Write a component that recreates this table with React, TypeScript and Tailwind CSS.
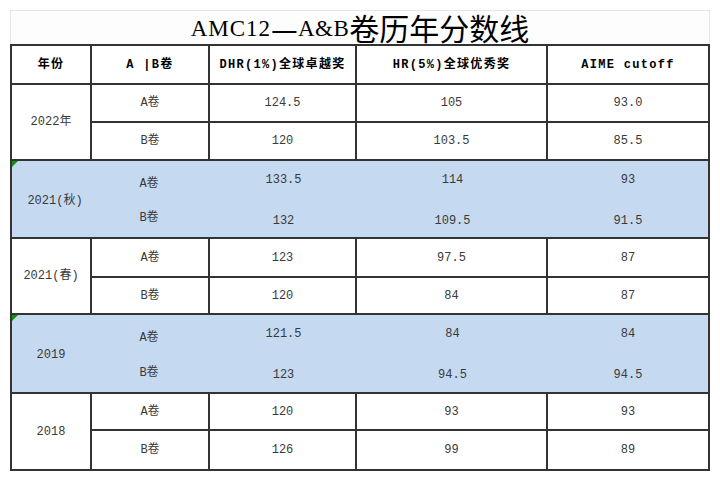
import React from "react";

const COLS = "grid grid-cols-[80px_118px_147px_191px_160px]";
const LINE = "border-[#333333]";
const FONT = { fontFamily: '"Liberation Mono", "Noto Sans CJK SC", monospace' };

type Group = {
  year: string;
  blue: boolean;
  shift?: boolean;
  rows: [string, string, string, string][];
  heights: string;
};

const groups: Group[] = [
  {
    year: "2022年",
    blue: false,
    heights: "grid-rows-[38px_36px]",
    rows: [
      ["A卷", "124.5", "105", "93.0"],
      ["B卷", "120", "103.5", "85.5"],
    ],
  },
  {
    year: "2021(秋)",
    blue: true,
    shift: true,
    heights: "grid-rows-[38px_38px]",
    rows: [
      ["A卷", "133.5", "114", "93"],
      ["B卷", "132", "109.5", "91.5"],
    ],
  },
  {
    year: "2021(春)",
    blue: false,
    heights: "grid-rows-[39px_35px]",
    rows: [
      ["A卷", "123", "97.5", "87"],
      ["B卷", "120", "84", "87"],
    ],
  },
  {
    year: "2019",
    blue: true,
    heights: "grid-rows-[38px_39px]",
    rows: [
      ["A卷", "121.5", "84", "84"],
      ["B卷", "123", "94.5", "94.5"],
    ],
  },
  {
    year: "2018",
    blue: false,
    heights: "grid-rows-[37px_38px]",
    rows: [
      ["A卷", "120", "93", "93"],
      ["B卷", "126", "99", "89"],
    ],
  },
];

function WhiteGroup({ g, last }: { g: Group; last: boolean }) {
  return (
    <div className={`${COLS} ${g.heights} border-t-2 ${LINE} ${last ? "border-b-2" : ""}`}>
      <div className={`row-span-2 border-r-2 ${LINE} flex items-center justify-center`}>{g.year}</div>
      {g.rows.map((r, ri) =>
        r.map((c, ci) => (
          <div
            key={`${ri}-${ci}`}
            className={`flex items-center justify-center ${LINE} ${ci < 3 ? "border-r-2" : ""} ${ri === 0 ? "border-b-2" : ""}`}
          >
            {c}
          </div>
        ))
      )}
    </div>
  );
}

function BlueGroup({ g }: { g: Group }) {
  return (
    <div className={`relative ${COLS} ${g.heights} border-t-2 ${LINE} bg-[#c5d9f1]`}>
      <div className="absolute top-0 left-0 w-0 h-0 border-t-[6px] border-r-[6px] border-t-[#129112] border-r-transparent" />
      <div className={`row-span-2 flex items-center justify-center pt-[3px] ${g.shift ? "pl-[6px]" : "pr-[2px]"}`}>
        {g.year}
      </div>
      {g.rows.map((r, ri) =>
        r.map((c, ci) => (
          <div
            key={`${ri}-${ci}`}
            className={`flex items-center justify-center ${
              ci === 0 ? (ri === 0 ? "pt-[7px] pr-[4px]" : "pt-0 pr-[4px]") : ri === 0 ? "pb-[0px]" : "pt-[5px]"
            }`}
          >
            {c}
          </div>
        ))
      )}
    </div>
  );
}

export default function App() {
  return (
    <div className="w-[720px] h-[479px] bg-white pt-[10px] pl-[10px]">
      <div className="w-[700px]">
        <div className="h-[34px] border-t border-l border-r border-[#e6e6e6] bg-[#fdfdfd] flex items-end justify-center pb-[2px] text-black leading-none">
          <span
            className="text-[23px] leading-none tracking-[1px] mb-[2px]"
            style={{ fontFamily: '"Liberation Serif", serif' }}
          >
            AMC12
          </span>
          <span className="text-[30px] leading-none" style={{ fontFamily: '"Noto Sans CJK SC", sans-serif' }}>
            —
          </span>
          <span
            className="text-[23px] leading-none tracking-[0.5px] mb-[2px]"
            style={{ fontFamily: '"Liberation Serif", serif' }}
          >
            A&amp;B
          </span>
          <span className="text-[30px] leading-none" style={{ fontFamily: '"Noto Sans CJK SC", sans-serif' }}>
            卷历年分数线
          </span>
        </div>
        <div className={`border-l-2 border-r-2 ${LINE} text-[12px] text-[#3a3a3a]`} style={FONT}>
          <div className={`${COLS} h-[39px] border-t-2 ${LINE} font-bold text-black tracking-[1.3px]`}>
            <div className={`border-r-2 ${LINE} flex items-center justify-center`}>年份</div>
            <div className={`border-r-2 ${LINE} flex items-center justify-center whitespace-pre`}>A |B卷</div>
            <div className={`border-r-2 ${LINE} flex items-center justify-center`}>DHR(1%)全球卓越奖</div>
            <div className={`border-r-2 ${LINE} flex items-center justify-center`}>HR(5%)全球优秀奖</div>
            <div className="flex items-center justify-center">AIME cutoff</div>
          </div>
          {groups.map((g, i) =>
            g.blue ? (
              <BlueGroup key={g.year} g={g} />
            ) : (
              <WhiteGroup key={g.year} g={g} last={i === groups.length - 1} />
            )
          )}
        </div>
      </div>
    </div>
  );
}
